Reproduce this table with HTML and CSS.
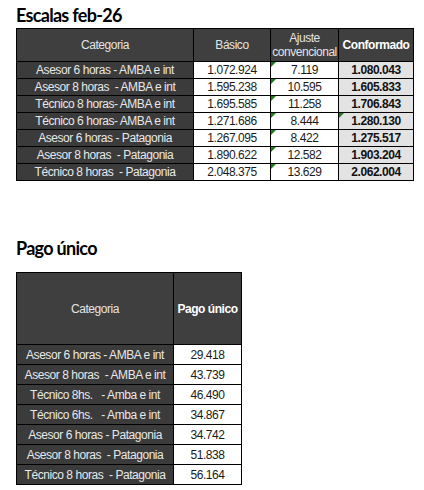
FILE: index.html
```html
<!DOCTYPE html>
<html lang="es">
<head>
<meta charset="utf-8">
<link rel="stylesheet" href="styles.css">
</head>
<body>
<section class="block block-escalas">
  <h2 class="title">Escalas feb-26</h2>
  <table class="grid grid-escalas">
    <colgroup>
      <col class="c-cat1"><col class="c-bas"><col class="c-aju"><col class="c-con">
    </colgroup>
    <thead>
      <tr class="head1">
        <th class="h-cat">Categoria</th>
        <th class="h-plain">Básico</th>
        <th class="h-plain h-two">Ajuste<br>convencional</th>
        <th class="h-bold">Conformado</th>
      </tr>
    </thead>
    <tbody>
      <tr><td class="cat">Asesor 6 horas - AMBA e int</td><td class="num">1.072.924</td><td class="num flag">7.119</td><td class="tot">1.080.043</td></tr>
      <tr><td class="cat">Asesor 8 horas &nbsp;- AMBA e int</td><td class="num">1.595.238</td><td class="num flag">10.595</td><td class="tot">1.605.833</td></tr>
      <tr><td class="cat">Técnico 8 horas- AMBA e int</td><td class="num">1.695.585</td><td class="num flag">11.258</td><td class="tot">1.706.843</td></tr>
      <tr><td class="cat">Técnico 6 horas- AMBA e int</td><td class="num">1.271.686</td><td class="num flag">8.444</td><td class="tot flag">1.280.130</td></tr>
      <tr><td class="cat">Asesor 6 horas - Patagonia</td><td class="num">1.267.095</td><td class="num flag">8.422</td><td class="tot">1.275.517</td></tr>
      <tr><td class="cat">Asesor 8 horas &nbsp;- Patagonia</td><td class="num">1.890.622</td><td class="num flag">12.582</td><td class="tot">1.903.204</td></tr>
      <tr><td class="cat">Técnico 8 horas &nbsp;- Patagonia</td><td class="num">2.048.375</td><td class="num flag">13.629</td><td class="tot">2.062.004</td></tr>
    </tbody>
  </table>
</section>

<section class="block block-pago">
  <h2 class="title">Pago único</h2>
  <table class="grid grid-pago">
    <colgroup>
      <col class="c-cat2"><col class="c-pago">
    </colgroup>
    <thead>
      <tr class="head2">
        <th class="h-cat">Categoria</th>
        <th class="h-bold">Pago único</th>
      </tr>
    </thead>
    <tbody>
      <tr><td class="cat">Asesor 6 horas - AMBA e int</td><td class="num">29.418</td></tr>
      <tr><td class="cat">Asesor 8 horas &nbsp;- AMBA e int</td><td class="num">43.739</td></tr>
      <tr><td class="cat">Técnico 8hs. &nbsp;&nbsp;- Amba e int</td><td class="num">46.490</td></tr>
      <tr><td class="cat">Técnico 6hs. &nbsp;&nbsp;- Amba e int</td><td class="num">34.867</td></tr>
      <tr><td class="cat">Asesor 6 horas - Patagonia</td><td class="num">34.742</td></tr>
      <tr><td class="cat">Asesor 8 horas &nbsp;- Patagonia</td><td class="num">51.838</td></tr>
      <tr><td class="cat">Técnico 8 horas &nbsp;- Patagonia</td><td class="num">56.164</td></tr>
    </tbody>
  </table>
</section>
</body>
</html>
```

FILE: styles.css
```css
html, body {
  margin: 0;
  padding: 0;
  background: #ffffff;
}

body {
  padding: 0 0 0 16px;
  font-family: "Liberation Sans", Arial, sans-serif;
  color: #111;
}

.title {
  margin: 0;
  font-family: Lato, "Open Sans", sans-serif;
  font-weight: 700;
  font-size: 18px;
  line-height: 24px;
  color: #000;
  letter-spacing: -0.7px;
}

.block-escalas {
  padding-top: 3px;
}

.block-escalas .title {
  margin-bottom: 1px;
}

.block-pago {
  padding-top: 55px;
}

.block-pago .title {
  margin-bottom: 12px;
}

.grid {
  border-collapse: collapse;
  table-layout: fixed;
  border: 1px solid #000;
  font-size: 12px;
  letter-spacing: -0.45px;
}

.grid-escalas { width: 397px; }
.grid-pago { width: 225px; }

.c-cat1 { width: 177px; }
.c-bas { width: 77px; }
.c-aju { width: 68px; }
.c-con { width: 75px; }

.c-cat2 { width: 157px; }
.c-pago { width: 68px; }

.grid th,
.grid td {
  border: 1px solid #000;
  padding: 0 1px;
  text-align: center;
  white-space: nowrap;
  overflow: hidden;
}

.grid th {
  background: #3f3f3f;
  color: #e4e4e4;
  font-weight: 400;
}

.head1 th {
  height: 32px;
  line-height: 14px;
}

.head2 th {
  height: 71px;
}

.h-two {
  line-height: 15px;
}

.h-bold {
  font-weight: 700 !important;
  color: #ffffff !important;
}

.grid td {
  line-height: 14px;
}

.grid-escalas td {
  height: 16px;
}

.grid-pago td {
  height: 19px;
}

.cat {
  background: #3b3b3b;
  color: #e8e8e8;
}

.num {
  background: #ffffff;
  color: #1a1a1a;
}

.tot {
  background: #e3e3e3;
  color: #111;
  font-weight: 700;
}

.flag {
  position: relative;
}

.flag::before {
  content: "";
  position: absolute;
  left: 0;
  top: 0;
  width: 0;
  height: 0;
  border-top: 5px solid #1e7a1e;
  border-right: 5px solid transparent;
}
```
